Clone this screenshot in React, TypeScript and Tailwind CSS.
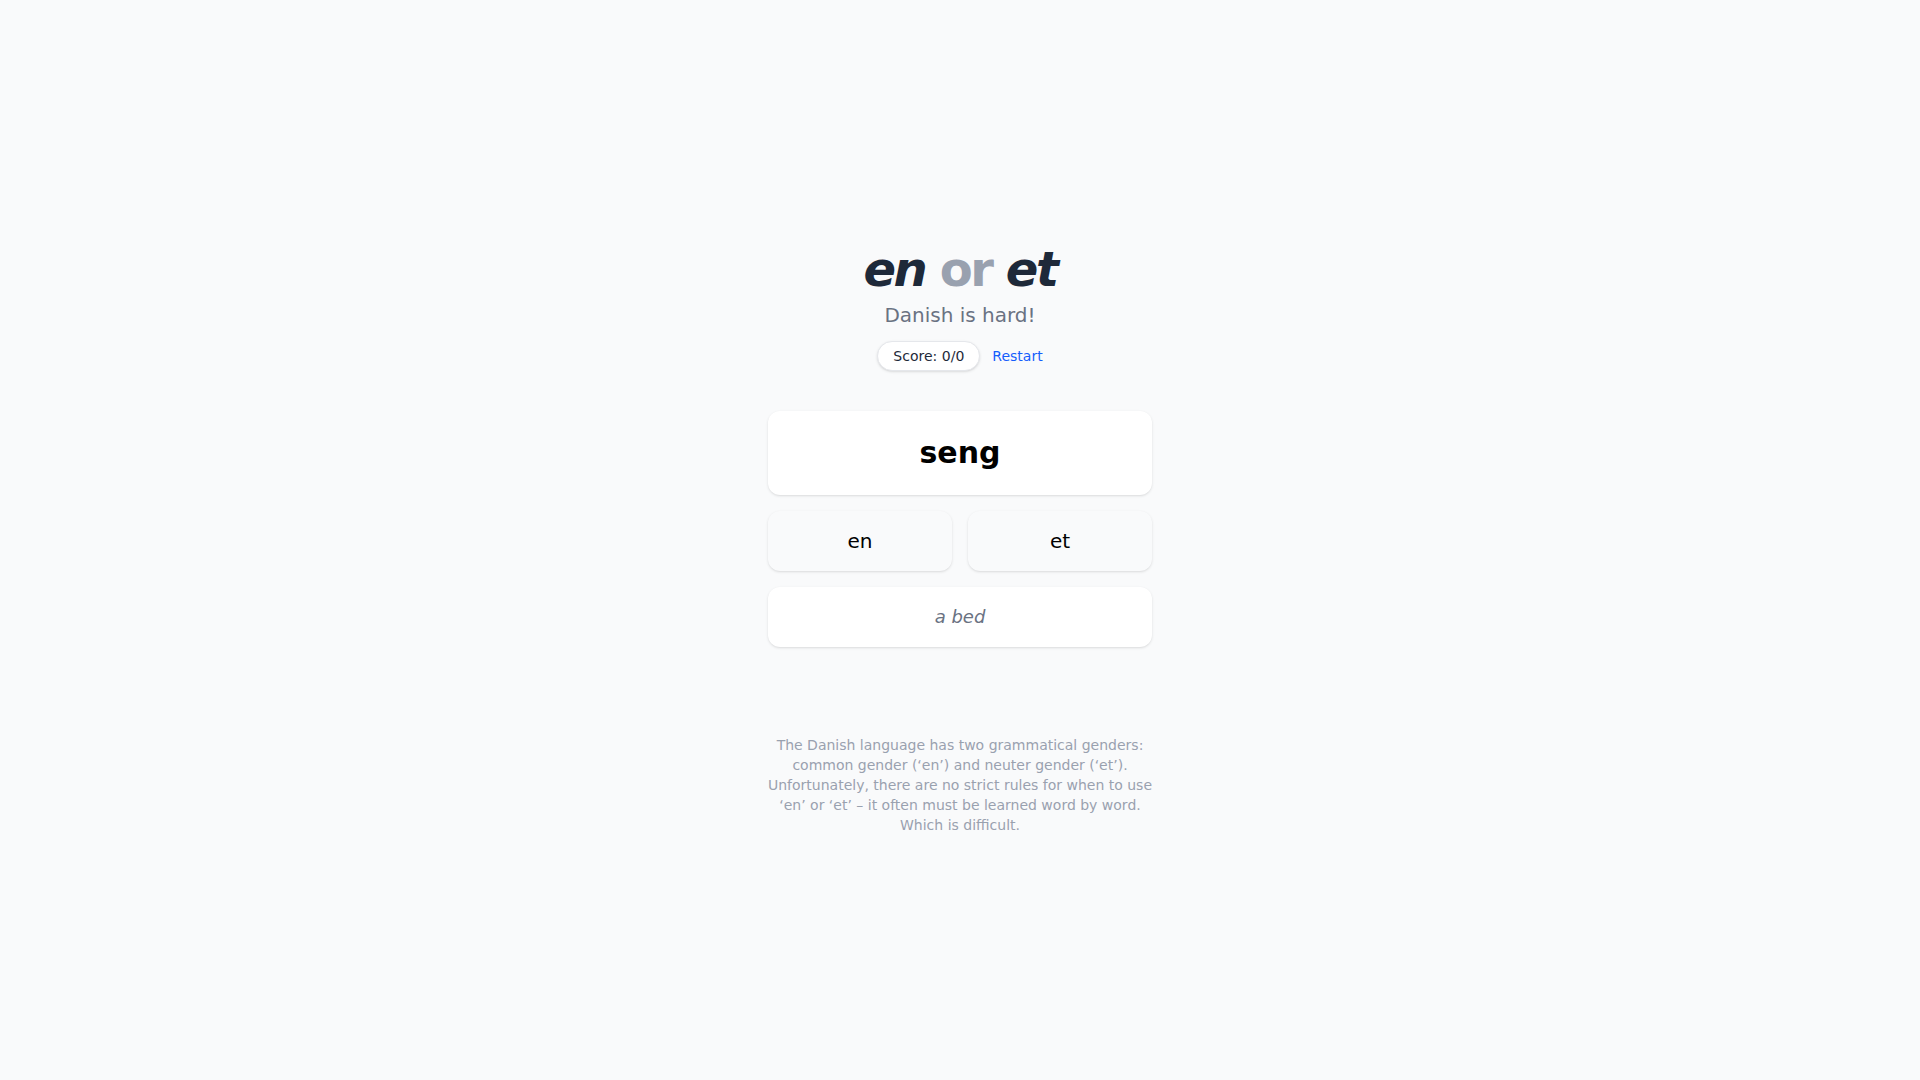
import React, { useState } from 'react';

const WORD = { word: 'seng', article: 'en', translation: 'a bed' };

const App: React.FC = () => {
  const [score, setScore] = useState({ right: 0, total: 0 });

  const answer = (a: string) => {
    setScore(s => ({ right: s.right + (a === WORD.article ? 1 : 0), total: s.total + 1 }));
  };

  return (
    <div className="min-h-screen bg-gray-50 flex flex-col items-center justify-center font-['DejaVu_Sans',sans-serif]">
      <div className="w-full max-w-sm flex flex-col items-center">
        <h1 className="text-5xl leading-none font-bold tracking-tighter text-gray-800">
          <span className="italic">en</span> <span className="text-gray-400">or</span> <span className="italic">et</span>
        </h1>
        <p className="mt-2 text-xl text-gray-500">Danish is hard!</p>
        <div className="mt-3 flex items-center gap-3">
          <span className="px-[15px] py-1 text-sm text-gray-800 bg-white border border-gray-200 rounded-full shadow-sm">
            Score: {score.right}/{score.total}
          </span>
          <button onClick={() => setScore({ right: 0, total: 0 })} className="text-sm text-blue-600 hover:underline">
            Restart
          </button>
        </div>

        <div className="mt-10 w-full space-y-4">
          <div className="bg-white rounded-xl shadow-sm p-6 text-center">
            <div className="text-3xl font-bold text-black">{WORD.word}</div>
          </div>
          <div className="grid grid-cols-2 gap-4">
            {['en', 'et'].map(a => (
              <button
                key={a}
                onClick={() => answer(a)}
                className="bg-gray-50 rounded-xl shadow-sm py-4 text-xl text-black hover:bg-white transition-colors"
              >
                {a}
              </button>
            ))}
          </div>
          <div className="bg-white rounded-xl shadow-sm py-4 text-center text-lg leading-7 italic text-gray-500">
            {WORD.translation}
          </div>
        </div>

        <p className="mt-[88px] mb-[1px] text-sm leading-5 text-gray-400 text-center">
          The Danish language has two grammatical genders: common gender (‘en’) and neuter gender (‘et’). Unfortunately, there are no strict rules for when to use ‘en’ or ‘et’ – it often must be learned word by word. Which is difficult.
        </p>
      </div>
    </div>
  );
};

export default App;
